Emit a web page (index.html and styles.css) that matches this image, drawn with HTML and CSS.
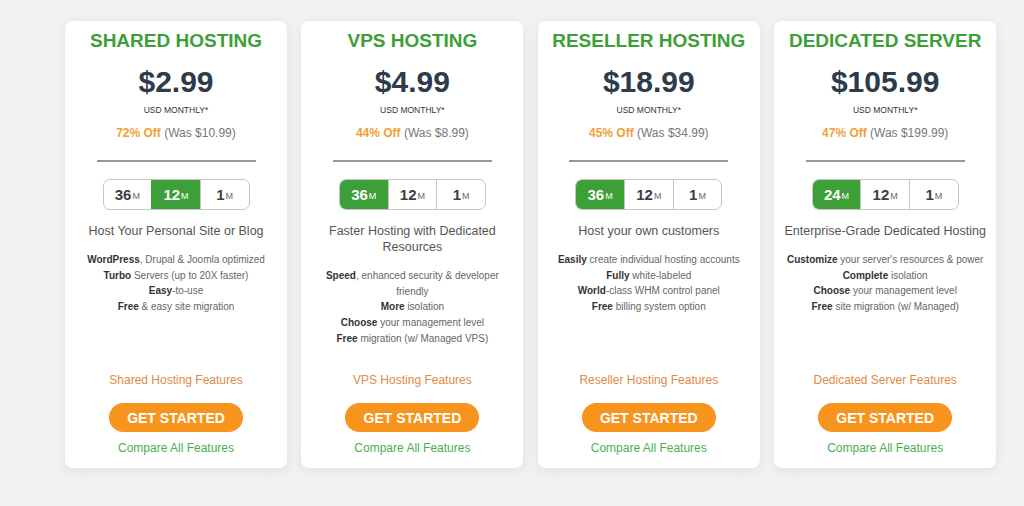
FILE: index.html
```html
<!DOCTYPE html>
<html>
<head>
<meta charset="utf-8">
<link rel="stylesheet" href="styles.css">
</head>
<body>
<div class="plans">
  <div class="card">
    <h2 class="title">SHARED HOSTING</h2>
    <div class="price">$2.99</div>
    <div class="unit">USD MONTHLY*</div>
    <div class="off"><b>72% Off</b> (Was $10.99)</div>
    <hr class="rule">
    <div class="terms">
      <span class="term">36<small>M</small></span>
      <span class="term active">12<small>M</small></span>
      <span class="term">1<small>M</small></span>
    </div>
    <p class="tagline">Host Your Personal Site or Blog</p>
    <ul class="features">
      <li><b>WordPress</b>, Drupal &amp; Joomla optimized</li>
      <li><b>Turbo</b> Servers (up to 20X faster)</li>
      <li><b>Easy</b>-to-use</li>
      <li><b>Free</b> &amp; easy site migration</li>
    </ul>
    <div class="bottom">
      <a class="more">Shared Hosting Features</a>
      <a class="cta">GET STARTED</a>
      <a class="compare">Compare All Features</a>
    </div>
  </div>
  <div class="card">
    <h2 class="title">VPS HOSTING</h2>
    <div class="price">$4.99</div>
    <div class="unit">USD MONTHLY*</div>
    <div class="off"><b>44% Off</b> (Was $8.99)</div>
    <hr class="rule">
    <div class="terms">
      <span class="term active">36<small>M</small></span>
      <span class="term">12<small>M</small></span>
      <span class="term">1<small>M</small></span>
    </div>
    <p class="tagline">Faster Hosting with Dedicated Resources</p>
    <ul class="features">
      <li><b>Speed</b>, enhanced security &amp; developer friendly</li>
      <li><b>More</b> isolation</li>
      <li><b>Choose</b> your management level</li>
      <li><b>Free</b> migration (w/ Managed VPS)</li>
    </ul>
    <div class="bottom">
      <a class="more">VPS Hosting Features</a>
      <a class="cta">GET STARTED</a>
      <a class="compare">Compare All Features</a>
    </div>
  </div>
  <div class="card">
    <h2 class="title">RESELLER HOSTING</h2>
    <div class="price">$18.99</div>
    <div class="unit">USD MONTHLY*</div>
    <div class="off"><b>45% Off</b> (Was $34.99)</div>
    <hr class="rule">
    <div class="terms">
      <span class="term active">36<small>M</small></span>
      <span class="term">12<small>M</small></span>
      <span class="term">1<small>M</small></span>
    </div>
    <p class="tagline">Host your own customers</p>
    <ul class="features">
      <li><b>Easily</b> create individual hosting accounts</li>
      <li><b>Fully</b> white-labeled</li>
      <li><b>World</b>-class WHM control panel</li>
      <li><b>Free</b> billing system option</li>
    </ul>
    <div class="bottom">
      <a class="more">Reseller Hosting Features</a>
      <a class="cta">GET STARTED</a>
      <a class="compare">Compare All Features</a>
    </div>
  </div>
  <div class="card">
    <h2 class="title">DEDICATED SERVER</h2>
    <div class="price">$105.99</div>
    <div class="unit">USD MONTHLY*</div>
    <div class="off"><b>47% Off</b> (Was $199.99)</div>
    <hr class="rule">
    <div class="terms">
      <span class="term active">24<small>M</small></span>
      <span class="term">12<small>M</small></span>
      <span class="term">1<small>M</small></span>
    </div>
    <p class="tagline">Enterprise-Grade Dedicated Hosting</p>
    <ul class="features">
      <li><b>Customize</b> your server's resources &amp; power</li>
      <li><b>Complete</b> isolation</li>
      <li><b>Choose</b> your management level</li>
      <li><b>Free</b> site migration (w/ Managed)</li>
    </ul>
    <div class="bottom">
      <a class="more">Dedicated Server Features</a>
      <a class="cta">GET STARTED</a>
      <a class="compare">Compare All Features</a>
    </div>
  </div>
</div>
</body>
</html>
```

FILE: styles.css
```css
* { box-sizing: border-box; }
html, body {
  margin: 0;
  padding: 0;
  background: #f2f2f4;
  font-family: "Liberation Sans", Arial, sans-serif;
  width: 1024px;
  height: 506px;
  overflow: hidden;
}
.plans {
  display: flex;
  gap: 14.4px;
  padding: 21px 0 0 65px;
}
.card {
  width: 222px;
  height: 447px;
  background: #fff;
  border-radius: 8px;
  box-shadow: 0 3px 12px rgba(40,60,20,0.09);
  display: flex;
  flex-direction: column;
  align-items: center;
  text-align: center;
  padding: 9px 10px 12px;
}
.title {
  margin: 0;
  font-size: 19px;
  line-height: 22px;
  font-weight: bold;
  color: #3c9f37;
  white-space: nowrap;
}
.price {
  margin-top: 13px;
  font-size: 30px;
  line-height: 34px;
  font-weight: bold;
  color: #2d3b4a;
}
.unit {
  margin-top: 6px;
  font-size: 8.5px;
  line-height: 10px;
  color: #333;
}
.off {
  margin-top: 10px;
  font-size: 12px;
  line-height: 16px;
  color: #777;
}
.off b { color: #f2a036; }
.rule {
  margin: 19px 0 0;
  width: 159px;
  height: 2px;
  border: 0;
  background: #8f9aa3;
}
.terms {
  margin-top: 17px;
  display: flex;
  width: 147px;
  height: 31px;
  border: 1px solid #c6c6c6;
  border-radius: 7px;
  overflow: hidden;
}
.term {
  flex: 1;
  display: flex;
  align-items: center;
  justify-content: center;
  font-size: 15px;
  font-weight: bold;
  color: #3b3f46;
  border-left: 1px solid #c6c6c6;
}
.term:first-child { border-left: 0; }
.term small {
  font-size: 9px;
  font-weight: normal;
  color: #666;
  margin-top: 3px;
  margin-left: 1px;
}
.term.active {
  background: #3c9f37;
  color: #fff;
  border-color: #3c9f37;
}
.term.active small { color: #fff; }
.tagline {
  margin: 13px 0 0;
  font-size: 12.5px;
  line-height: 16px;
  color: #555;
}
.features {
  list-style: none;
  margin: 13px 0 0;
  padding: 0;
  font-size: 10px;
  line-height: 15.7px;
  color: #666;
}
.features b { color: #333; }
.bottom {
  margin-top: auto;
  display: flex;
  flex-direction: column;
  align-items: center;
}
.more {
  font-size: 12px;
  line-height: 16px;
  color: #e08a45;
}
.cta {
  margin-top: 15px;
  width: 134px;
  height: 29px;
  border-radius: 15px;
  background: #f7941d;
  color: #fff;
  font-weight: bold;
  font-size: 14px;
  display: flex;
  align-items: center;
  justify-content: center;
}
.compare {
  margin-top: 8px;
  font-size: 12px;
  line-height: 16px;
  color: #4caf50;
}
```
